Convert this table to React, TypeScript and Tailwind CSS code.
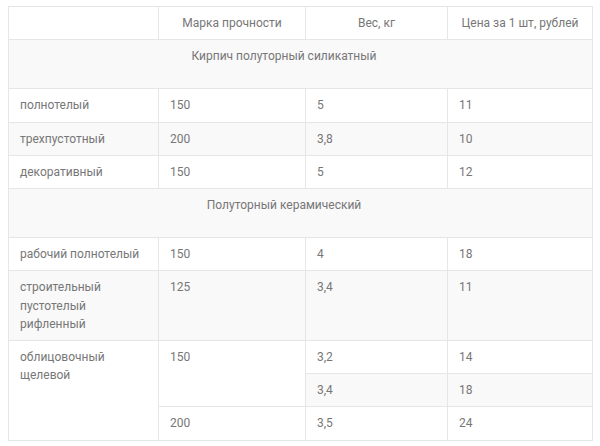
const cell = "border border-[#e6e6e6] px-[11px] py-[7px] align-top";

const App = () => {
  const group1: string[][] = [
    ["полнотелый", "150", "5", "11"],
    ["трехпустотный", "200", "3,8", "10"],
    ["декоративный", "150", "5", "12"],
  ];

  const section = (title: string, bg: string) => (
    <tr className={bg}>
      <td colSpan={4} className={`${cell} pb-[23px] pr-[44px] text-center`}>
        {title}
      </td>
    </tr>
  );

  const plainRow = (r: string[], bg: string, key: string) => (
    <tr key={key} className={bg}>
      {r.map((t, i) => (
        <td key={i} className={cell}>
          {t}
        </td>
      ))}
    </tr>
  );

  return (
    <div className="min-h-[446px] w-[600px] bg-white pl-[8px] pt-[6px]">
      <table
        className="w-[584px] table-fixed border-collapse text-[12px] leading-[18.2px] text-[#777777]"
        style={{ fontFamily: "Roboto, 'Liberation Sans', sans-serif" }}
      >
        <colgroup>
          <col className="w-[150px]" />
          <col className="w-[147px]" />
          <col className="w-[142px]" />
          <col className="w-[145px]" />
        </colgroup>
        <tbody>
          <tr className="bg-white">
            <td className={cell}></td>
            <td className={`${cell} text-center`}>Марка прочности</td>
            <td className={`${cell} text-center`}>Вес, кг</td>
            <td className={`${cell} text-center`}>Цена за 1 шт, рублей</td>
          </tr>
          {section("Кирпич полуторный силикатный", "bg-[#f9f9f9]")}
          {group1.map((r, i) =>
            plainRow(r, i % 2 === 0 ? "bg-white" : "bg-[#f9f9f9]", "g" + i)
          )}
          {section("Полуторный керамический", "bg-[#f9f9f9]")}
          {plainRow(["рабочий полнотелый", "150", "4", "18"], "bg-white", "r1")}
          <tr className="bg-[#f9f9f9]">
            <td className={cell}>
              строительный
              <br />
              пустотелый
              <br />
              рифленный
            </td>
            <td className={cell}>125</td>
            <td className={cell}>3,4</td>
            <td className={cell}>11</td>
          </tr>
          <tr className="bg-white">
            <td rowSpan={3} className={`${cell} bg-white`}>
              облицовочный
              <br />
              щелевой
            </td>
            <td rowSpan={2} className={`${cell} bg-white`}>
              150
            </td>
            <td className={cell}>3,2</td>
            <td className={cell}>14</td>
          </tr>
          <tr className="bg-[#f9f9f9]">
            <td className={cell}>3,4</td>
            <td className={cell}>18</td>
          </tr>
          <tr className="bg-white">
            <td className={cell}>200</td>
            <td className={cell}>3,5</td>
            <td className={cell}>24</td>
          </tr>
        </tbody>
      </table>
    </div>
  );
};

export default App;
